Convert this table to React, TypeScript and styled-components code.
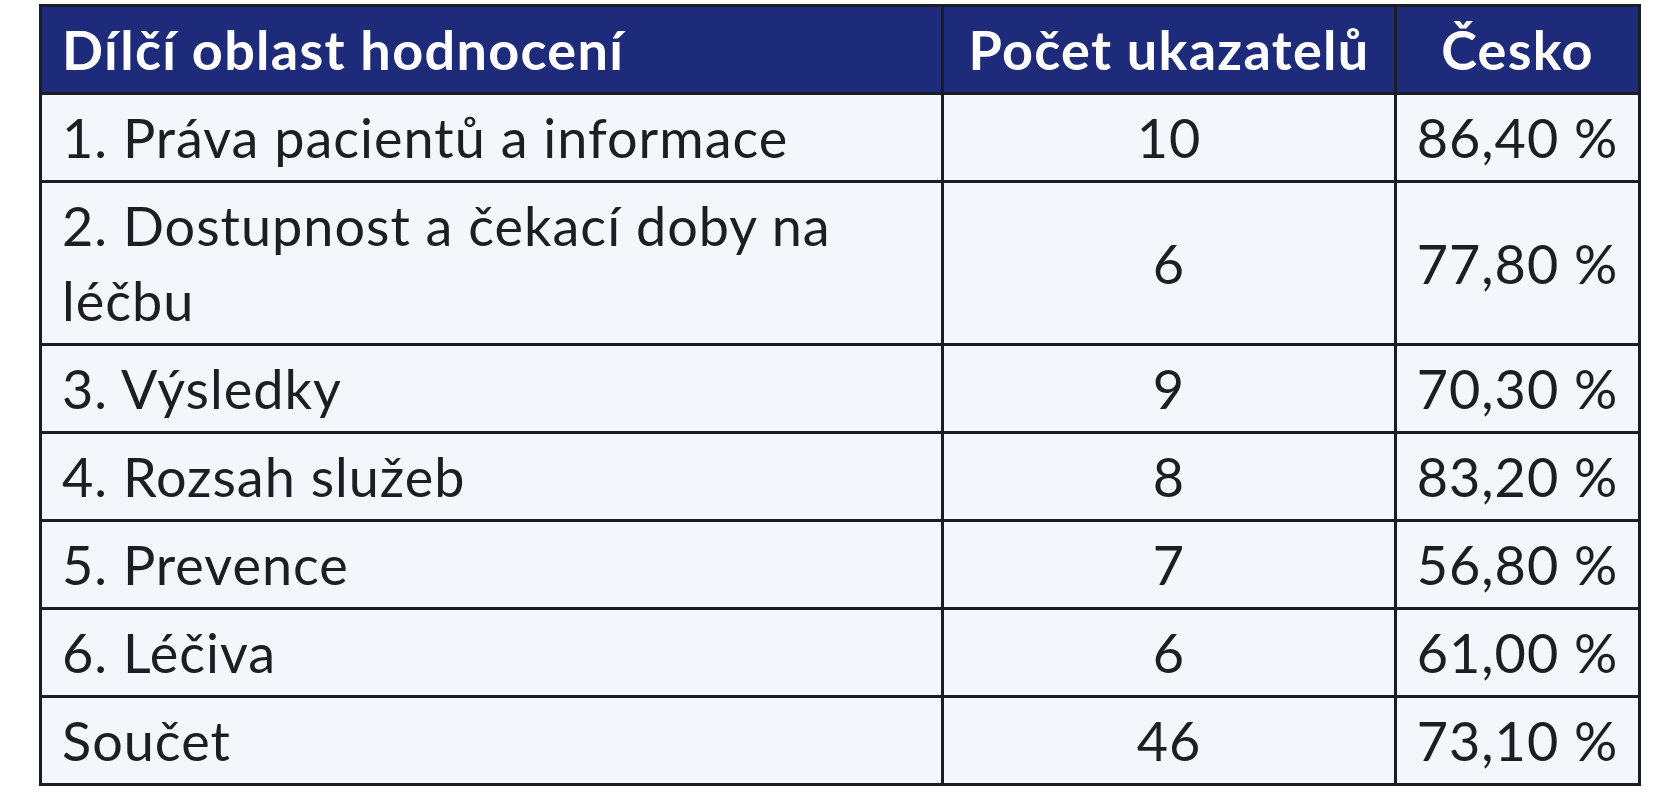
import React from "react";
import styled, { createGlobalStyle } from "styled-components";

const GlobalStyle = createGlobalStyle`
  body {
    margin: 0;
    background: #ffffff;
    font-family: "Lato", "Open Sans", sans-serif;
  }
`;

const Page = styled.div`
  padding: 4px 0 0 39px;
`;

const Table = styled.table`
  width: 1602px;
  border-collapse: collapse;
  border: 3px solid #1a1d26;
  table-layout: fixed;
`;

const HeadCell = styled.th<{ $align?: "left" | "center" }>`
  background: #1d2b7a;
  color: #ffffff;
  font-weight: 700;
  font-size: 54px;
  letter-spacing: 1.3px;
  line-height: 73px;
  height: 85px;
  padding: 0 ${(p) => (p.$align === "left" ? "20px" : "4px")};
  text-align: ${(p) => p.$align ?? "center"};
  border: 3px solid #1a1d26;
  white-space: nowrap;
`;

const Cell = styled.td<{ $align?: "left" | "center" }>`
  background: #f3f7fb;
  color: #1c1e24;
  font-size: 54px;
  letter-spacing: 1px;
  line-height: 75px;
  height: 75px;
  padding: 5px ${(p) => (p.$align === "left" ? "20px" : "4px")};
  text-align: ${(p) => p.$align ?? "center"};
  white-space: ${(p) => (p.$align === "left" ? "normal" : "nowrap")};
  border: 3px solid #1a1d26;
  vertical-align: middle;
`;

const rows = [
  { name: "1. Práva pacientů a informace", count: "10", value: "86,40 %" },
  { name: "2. Dostupnost a čekací doby na léčbu", count: "6", value: "77,80 %" },
  { name: "3. Výsledky", count: "9", value: "70,30 %" },
  { name: "4. Rozsah služeb", count: "8", value: "83,20 %" },
  { name: "5. Prevence", count: "7", value: "56,80 %" },
  { name: "6. Léčiva", count: "6", value: "61,00 %" },
  { name: "Součet", count: "46", value: "73,10 %" },
];

const App: React.FC = () => {
  return (
    <>
      <GlobalStyle />
      <Page>
        <Table>
          <colgroup>
            <col style={{ width: 902 }} />
            <col style={{ width: 453 }} />
            <col style={{ width: 244 }} />
          </colgroup>
          <thead>
            <tr>
              <HeadCell $align="left">Dílčí oblast hodnocení</HeadCell>
              <HeadCell>Počet ukazatelů</HeadCell>
              <HeadCell>Česko</HeadCell>
            </tr>
          </thead>
          <tbody>
            {rows.map((row) => (
              <tr key={row.name}>
                <Cell $align="left">{row.name}</Cell>
                <Cell>{row.count}</Cell>
                <Cell>{row.value}</Cell>
              </tr>
            ))}
          </tbody>
        </Table>
      </Page>
    </>
  );
};

export default App;
